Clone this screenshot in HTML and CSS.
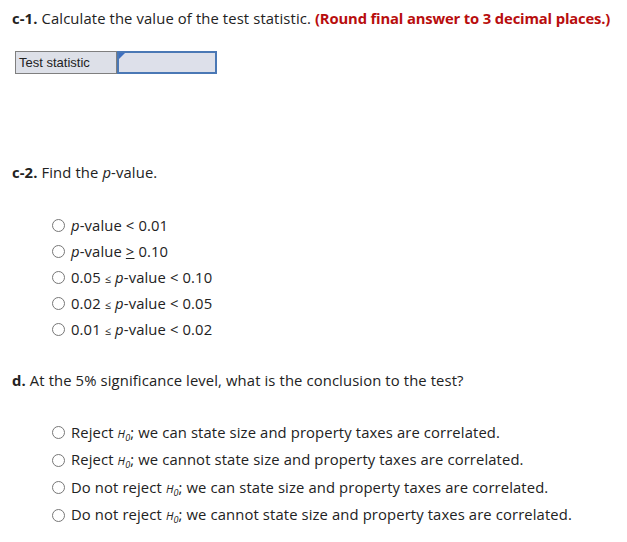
FILE: index.html
```html
<!DOCTYPE html>
<html>
<head>
<meta charset="utf-8">
<link rel="stylesheet" href="styles.css">
</head>
<body>
<div class="page">
  <p class="q q1"><b>c-1.</b> Calculate the value of the test statistic. <span class="note">(Round final answer to 3 decimal places.)</span></p>
  <div class="answer-table">
    <div class="label-cell">Test statistic</div>
    <div class="input-cell"><span class="flag"></span></div>
  </div>

  <p class="q q2"><b>c-2.</b> Find the <i>p</i>-value.</p>
  <ul class="options opts-p">
    <li><span class="radio"></span><span><i>p</i>-value &lt; 0.01</span></li>
    <li><span class="radio"></span><span><i>p</i>-value <u>&gt;</u> 0.10</span></li>
    <li><span class="radio"></span><span>0.05 <span class="le">≤</span> <i>p</i>-value &lt; 0.10</span></li>
    <li><span class="radio"></span><span>0.02 <span class="le">≤</span> <i>p</i>-value &lt; 0.05</span></li>
    <li><span class="radio"></span><span>0.01 <span class="le">≤</span> <i>p</i>-value &lt; 0.02</span></li>
  </ul>

  <p class="q q3"><b>d.</b> At the 5% significance level, what is the conclusion to the test?</p>
  <ul class="options opts-d">
    <li><span class="radio"></span><span>Reject <span class="h0">H<sub>0</sub></span>; we can state size and property taxes are correlated.</span></li>
    <li><span class="radio"></span><span>Reject <span class="h0">H<sub>0</sub></span>; we cannot state size and property taxes are correlated.</span></li>
    <li><span class="radio"></span><span>Do not reject <span class="h0">H<sub>0</sub></span>; we can state size and property taxes are correlated.</span></li>
    <li><span class="radio"></span><span>Do not reject <span class="h0">H<sub>0</sub></span>; we cannot state size and property taxes are correlated.</span></li>
  </ul>
</div>
</body>
</html>
```

FILE: styles.css
```css
html, body {
  margin: 0;
  padding: 0;
  background: #fff;
}
body {
  font-family: "Open Sans", "Liberation Sans", sans-serif;
  color: #222;
  font-size: 14.8px;
  letter-spacing: 0.12px;
}
.page {
  padding: 8px 0 0 12px;
}
.q {
  margin: 0;
  line-height: 20px;
}
.q b {
  font-weight: 700;
}
.note {
  color: #b80d0d;
  font-weight: 700;
  letter-spacing: -0.15px;
}
.answer-table {
  display: flex;
  margin: 23px 0 0 3px;
  width: 202px;
  height: 23px;
  box-sizing: border-box;
  border: 1px solid #7f7f7f;
  background: #dde0e8;
  letter-spacing: 0;
}
.label-cell {
  width: 101px;
  box-sizing: border-box;
  border-right: 1px solid #7f7f7f;
  font-family: "Liberation Sans", Arial, sans-serif;
  font-size: 13px;
  line-height: 21px;
  padding-left: 3px;
  color: #222;
}
.input-cell {
  position: relative;
  flex: 1;
  border: 2px solid #4a78b5;
  margin: -1px -1px -1px 0;
  background: #dde0ea;
}
.flag {
  position: absolute;
  left: 0;
  top: 0;
  width: 0;
  height: 0;
  border-top: 6px solid #3d6fc0;
  border-right: 6px solid transparent;
}
.q2 {
  margin-top: 88px;
}
.options {
  list-style: none;
  margin: 0;
  padding: 0 0 0 40px;
}
.options li {
  display: flex;
  align-items: center;
  gap: 6px;
}
.opts-p {
  margin-top: 30px;
}
.opts-p li {
  height: 26px;
}
.radio {
  display: inline-block;
  width: 11px;
  height: 11px;
  border: 1px solid #777;
  border-radius: 50%;
  flex: none;
}
.le {
  font-size: 11px;
}
.q3 {
  margin-top: 28px;
}
.opts-d {
  margin-top: 29px;
}
.opts-d li {
  height: 27.5px;
}
.h0 {
  font-style: italic;
  font-size: 11px;
}
.h0 sub {
  font-size: 9px;
}
```
